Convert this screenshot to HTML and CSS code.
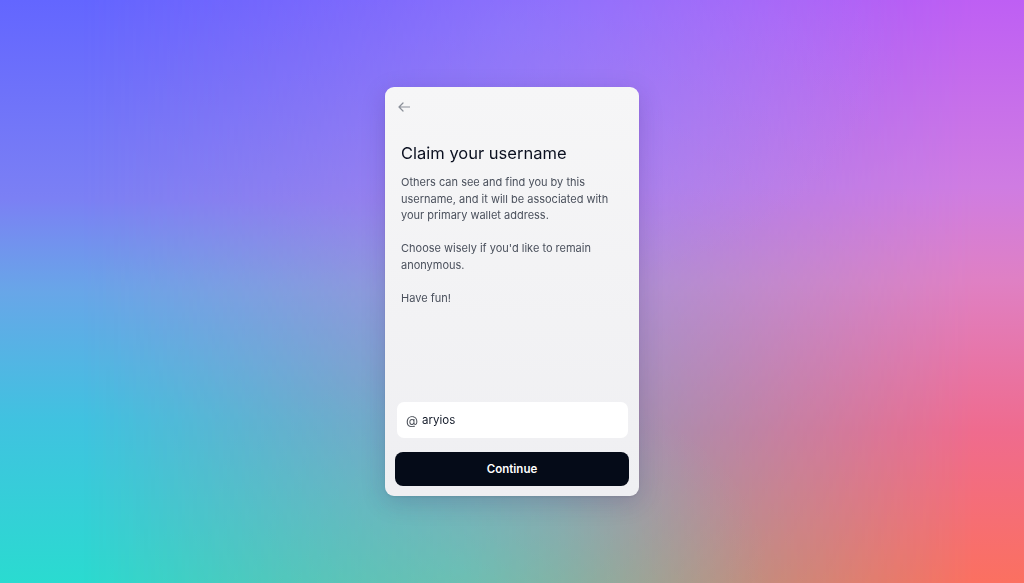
FILE: index.html
```html
<!DOCTYPE html>
<html>
<head>
  <title>Claim your username</title>
  <meta charset="UTF-8">
  <meta name="viewport" content="width=device-width, initial-scale=1.0">
  <link rel="stylesheet" href="styles.css">
</head>
<body>
  <div class="backdrop"></div>

  <main class="card">
    <button class="back-button" aria-label="Back">
      <svg width="12" height="10" viewBox="0 0 12 10" fill="none">
        <path d="M11.5 5H1M5 1L1 5l4 4" stroke="#8b9099" stroke-width="1.2" stroke-linecap="round" stroke-linejoin="round"/>
      </svg>
    </button>

    <section class="card-content">
      <h1>Claim your username</h1>
      <p>Others can see and find you by this username, and it will be associated with your primary wallet address.</p>
      <p>Choose wisely if you'd like to remain anonymous.</p>
      <p>Have fun!</p>
    </section>

    <label class="username-field">
      <span class="at-sign">@</span>
      <input type="text" id="username" value="aryios">
    </label>

    <button class="continue-button">Continue</button>
  </main>
</body>
</html>
```

FILE: styles.css
```css
* {
  box-sizing: border-box;
}

html, body {
  height: 100%;
}

body {
  margin: 0;
  font-family: Inter, 'Noto Sans', sans-serif;
  color: #111827;
  display: flex;
  align-items: center;
  justify-content: center;
  overflow: hidden;
  /* left edge of the backdrop */
  background: linear-gradient(to bottom, #6366ff 0%, #7b80f4 34%, #68a6e8 50%, #40c2e0 72%, #2adbd0 100%);
}

/* right edge of the backdrop, faded in from the left */
.backdrop {
  position: fixed;
  inset: 0;
  background: linear-gradient(to bottom, #be5ff4 0%, #cf7ce2 32%, #df80c4 48%, #ef6b8e 74%, #fb7060 100%);
  -webkit-mask-image: linear-gradient(to right, transparent 8%, rgba(0,0,0,0.5) 55%, #000 95%);
  mask-image: linear-gradient(to right, transparent 8%, rgba(0,0,0,0.5) 55%, #000 95%);
}

.backdrop::after {
  content: '';
  position: absolute;
  inset: 0;
  background: radial-gradient(ellipse 38% 45% at 50% 5%, rgba(190, 170, 255, 0.45), transparent 100%),
              radial-gradient(ellipse 30% 35% at 45% 98%, rgba(130, 220, 210, 0.35), transparent 100%);
}

.card {
  position: relative;
  width: 254px;
  height: 409px;
  display: flex;
  flex-direction: column;
  padding: 10px;
  background: linear-gradient(to bottom, #f6f6f7, #efeff2);
  border-radius: 9px;
  box-shadow: 0 6px 24px rgba(40, 20, 90, 0.18), 0 1px 3px rgba(0, 0, 0, 0.08);
}

.back-button {
  align-self: flex-start;
  width: 20px;
  height: 20px;
  margin-left: -1px;
  padding: 0;
  border: none;
  background: none;
  display: flex;
  align-items: center;
  justify-content: center;
  cursor: pointer;
}

.card-content {
  padding: 0 6px;
}

h1 {
  margin: 24px 0 9px;
  font-size: 16.5px;
  line-height: 24px;
  font-weight: 400;
  color: #0b1020;
}

p {
  margin: 0 0 16.5px;
  font-size: 11px;
  line-height: 16.5px;
  color: #4a505c;
}

.username-field {
  margin: auto 1px 0 2px;
  height: 36px;
  display: flex;
  align-items: center;
  gap: 4px;
  padding: 0 9px;
  background: #fff;
  border-radius: 7px;
}

.at-sign {
  font-size: 12.5px;
  color: #4a4f58;
}

.username-field input {
  flex: 1;
  min-width: 0;
  border: none;
  outline: none;
  padding: 0;
  background: transparent;
  font-family: inherit;
  font-size: 11.5px;
  color: #111827;
}

.continue-button {
  margin-top: 14px;
  height: 34px;
  border: none;
  border-radius: 8px;
  background: #050b18;
  color: #fff;
  font-family: inherit;
  font-size: 11.5px;
  font-weight: 600;
  cursor: pointer;
}

.continue-button:hover {
  background: #111827;
}
```
